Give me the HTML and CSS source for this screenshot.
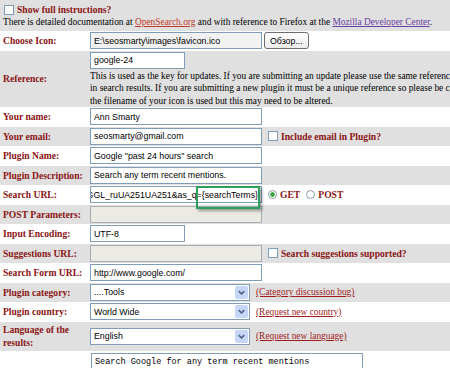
FILE: index.html
```html
<!DOCTYPE html>
<html lang="en">
<head>
    <meta charset="UTF-8">
    <title>Add Search Plugin</title>
    <link rel="stylesheet" href="styles.css">
</head>
<body>
    <form class="plugin-form">
        <div class="intro">
            <label class="toggle"><input type="checkbox" class="box"> Show full instructions?</label>
            <p class="docs">There is detailed documentation at <a href="#" class="ext">OpenSearch.org</a> and with reference to Firefox at the <a href="#" class="seen">Mozilla Developer Center</a>.</p>
        </div>

        <div class="row">
            <label class="name">Choose Icon:</label>
            <div class="field">
                <input type="text" class="text file" value="E:\seosmarty\images\favicon.ico" readonly>
                <button type="button" class="browse">Обзор...</button>
            </div>
        </div>

        <div class="row tall">
            <label class="name">Reference:</label>
            <div class="field stack">
                <input type="text" class="text short" value="google-24">
                <p class="help">This is used as the key for updates. If you are submitting an update please use the same reference as before, it will not be shown<br>in search results. If you are submitting a new plugin it must be a unique reference so please be careful. By default<br>the filename of your icon is used but this may need to be altered.</p>
            </div>
        </div>

        <div class="row">
            <label class="name">Your name:</label>
            <div class="field"><input type="text" class="text" value="Ann Smarty"></div>
        </div>

        <div class="row">
            <label class="name">Your email:</label>
            <div class="field">
                <input type="text" class="text" value="seosmarty@gmail.com">
                <label class="option"><input type="checkbox" class="box"> Include email in Plugin?</label>
            </div>
        </div>

        <div class="row">
            <label class="name">Plugin Name:</label>
            <div class="field"><input type="text" class="text" value='Google "past 24 hours" search'></div>
        </div>

        <div class="row">
            <label class="name">Plugin Description:</label>
            <div class="field"><input type="text" class="text" value="Search any term recent mentions."></div>
        </div>

        <div class="row url">
            <label class="name">Search URL:</label>
            <div class="field">
                <div class="text scrolled"><span>GGL_ruUA251UA251&amp;as_q={searchTerms}</span></div>
                <label class="option"><input type="radio" name="method" class="dot" checked> GET</label>
                <label class="option"><input type="radio" name="method" class="dot"> POST</label>
            </div>
            <span class="highlight"></span>
        </div>

        <div class="row">
            <label class="name">POST Parameters:</label>
            <div class="field"><input type="text" class="text" disabled></div>
        </div>

        <div class="row">
            <label class="name">Input Encoding:</label>
            <div class="field"><input type="text" class="text short" value="UTF-8"></div>
        </div>

        <div class="row">
            <label class="name">Suggestions URL:</label>
            <div class="field">
                <input type="text" class="text" disabled>
                <label class="option"><input type="checkbox" class="box"> Search suggestions supported?</label>
            </div>
        </div>

        <div class="row">
            <label class="name">Search Form URL:</label>
            <div class="field"><input type="text" class="text" value="http://www.google.com/"></div>
        </div>

        <div class="row">
            <label class="name">Plugin category:</label>
            <div class="field">
                <span class="select">
                    <select><option>....Tools</option></select>
                    <svg class="arrow" viewBox="0 0 13 14"><path d="M3.5 5.5 L6.5 8.5 L9.5 5.5" fill="none" stroke="#4d6185" stroke-width="1.6"/></svg>
                </span>
                <a href="#" class="aside">(Category discussion bug)</a>
            </div>
        </div>

        <div class="row">
            <label class="name">Plugin country:</label>
            <div class="field">
                <span class="select">
                    <select><option>World Wide</option></select>
                    <svg class="arrow" viewBox="0 0 13 14"><path d="M3.5 5.5 L6.5 8.5 L9.5 5.5" fill="none" stroke="#4d6185" stroke-width="1.6"/></svg>
                </span>
                <a href="#" class="aside">(Request new country)</a>
            </div>
        </div>

        <div class="row lang">
            <label class="name">Language of the results:</label>
            <div class="field">
                <span class="select">
                    <select><option>English</option></select>
                    <svg class="arrow" viewBox="0 0 13 14"><path d="M3.5 5.5 L6.5 8.5 L9.5 5.5" fill="none" stroke="#4d6185" stroke-width="1.6"/></svg>
                </span>
                <a href="#" class="aside">(Request new language)</a>
            </div>
        </div>

        <div class="row notes">
            <label class="name">Comments:</label>
            <div class="field"><textarea class="memo">Search Google for any term recent mentions</textarea></div>
        </div>
    </form>
</body>
</html>
```

FILE: styles.css
```css
html, body {
    margin: 0;
    padding: 0;
    overflow: hidden;
}
body {
    background: #e0e0e0;
    font-family: "Liberation Serif", "Times New Roman", serif;
    font-size: 9.4px;
    color: #000;
}
.plugin-form {
    width: 700px;
}
.intro {
    background: #e0e0e0;
    padding: 3px 3px 2px;
    height: 26px;
}
.toggle {
    display: flex;
    align-items: center;
    gap: 3px;
    font-weight: bold;
    font-size: 9.6px;
    color: #8b1414;
    padding-left: 1px;
    height: 13px;
}
.docs {
    margin: 0;
    line-height: 13px;
    white-space: nowrap;
}
.docs a.ext {
    color: #c0392b;
}
.docs a.seen {
    color: #6b3fa0;
}
.row {
    display: grid;
    grid-template-columns: 87px 1fr;
    align-items: center;
    padding-left: 3px;
    min-height: 19.5px;
    background: #e0e0e0;
}
.row:nth-child(even) {
    background: #fff;
}
.row.tall {
    min-height: 56px;
}
.row.lang {
    min-height: 29px;
}
.row.notes {
    align-items: start;
    padding-top: 2px;
}
.row.notes .name {
    padding-top: 14px;
}
.name {
    font-weight: bold;
    font-size: 9.6px;
    color: #8b1414;
    line-height: 13px;
}
.field {
    display: flex;
    align-items: center;
    gap: 6px;
}
.field.stack {
    flex-direction: column;
    align-items: flex-start;
    gap: 0;
    padding-top: 1px;
}
.text {
    box-sizing: border-box;
    width: 172px;
    height: 17px;
    border: 1px solid #7f9db9;
    padding: 0 3px;
    font-family: "Liberation Sans", Arial, sans-serif;
    font-size: 8.8px;
    color: #000;
    background: #fff;
    margin: 0;
}
.text.short {
    width: 95px;
}
.text:disabled {
    background: #ebebe4;
    border-color: #a5acb2;
}
.text.file {
    background: #f2f2f2;
}
.field .file + .browse {
    margin-left: -4px;
}
.browse {
    height: 17px;
    padding: 0 5px;
    border: 1px solid #6e6e6e;
    border-radius: 3px;
    background: linear-gradient(#ffffff, #ececec);
    font-family: "Liberation Sans", Arial, sans-serif;
    font-size: 8.8px;
    color: #000;
}
.help {
    margin: 1px 0 0;
    line-height: 12.5px;
    white-space: nowrap;
}
.scrolled {
    display: flex;
    align-items: center;
    justify-content: flex-end;
    overflow: hidden;
    white-space: nowrap;
    padding: 0 3px 0 0;
}
.option {
    display: flex;
    align-items: center;
    gap: 3px;
    font-weight: bold;
    font-size: 9.6px;
    color: #8b1414;
}
.box, .dot {
    appearance: none;
    margin: 0;
    width: 10px;
    height: 10px;
    border: 1px solid #7f9db9;
    background: #fff;
    box-sizing: border-box;
}
.dot {
    border-radius: 50%;
    border-color: #8c9aa8;
    width: 9px;
    height: 9px;
}
.dot:checked {
    background: radial-gradient(circle, #3da33d 0, #3da33d 2px, #fff 2.5px);
}
.url {
    position: relative;
}
.highlight {
    position: absolute;
    left: 196px;
    top: 1px;
    width: 60px;
    height: 19px;
    border: 2px solid #2e9e5b;
    box-shadow: 2px 2px 3px rgba(0, 0, 0, 0.35);
}
.select {
    position: relative;
    display: inline-flex;
}
.select select {
    appearance: none;
    box-sizing: border-box;
    width: 160px;
    height: 17px;
    border: 1px solid #7f9db9;
    padding: 0 3px;
    font-family: "Liberation Sans", Arial, sans-serif;
    font-size: 8.8px;
    background: #fff;
    color: #000;
    margin: 0;
}
.select .arrow {
    position: absolute;
    right: 2px;
    top: 2px;
    width: 13px;
    height: 13px;
    background: #c6d6f7;
    border-radius: 2px;
    pointer-events: none;
}
.aside {
    color: #a01e1e;
    font-size: 9.4px;
}
.memo {
    box-sizing: border-box;
    width: 272px;
    height: 40px;
    border: 1px solid #7f9db9;
    padding: 3px 3px;
    font-family: "Liberation Mono", "Courier New", monospace;
    font-size: 8.5px;
    resize: none;
    margin: 0 0 0 1px;
}
```
